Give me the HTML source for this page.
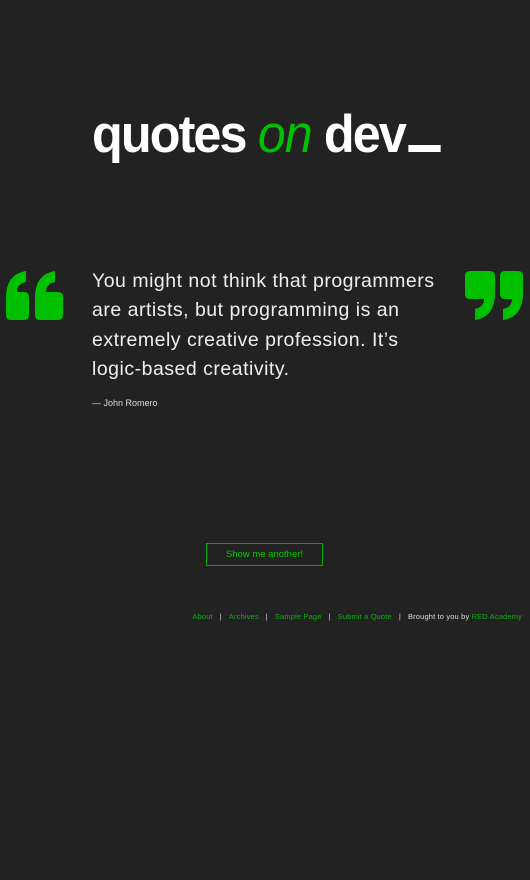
<!DOCTYPE html>
<html><head><style>
body{margin:0;background:#222;width:530px;height:880px;overflow:hidden;font-family:"Liberation Sans",sans-serif;position:relative}
.t{position:absolute;left:92px;top:104px;font-size:53px;font-weight:bold;color:#fff;letter-spacing:-2px;white-space:nowrap;transform:scaleX(0.95);transform-origin:left}
.t i{color:#00c000;font-weight:normal;letter-spacing:-1px}
.t b{display:inline-block;width:34px;height:7px;background:#fff;margin-left:4px;vertical-align:baseline}
.q{position:absolute;left:92px;top:267px;width:350px;font-size:19.5px;line-height:29.3px;color:#eee;letter-spacing:0.5px}
.a{position:absolute;left:92px;top:398px;font-size:9px;color:#ddd}
.b{position:absolute;left:206px;top:543px;width:115px;height:21px;border:1px solid #0a0;color:#0c0;font-size:9.5px;text-align:center;line-height:21px;box-sizing:content-box}
.f{position:absolute;right:8px;top:612px;font-size:7.5px;color:#ddd;white-space:nowrap;letter-spacing:0.15px}
.f a{color:#1a1}
.f s{text-decoration:none;color:#ddd;margin:0 7px}
</style></head><body>
<svg style="position:absolute;left:0;top:260px" width="530" height="70">
<g fill="#00c000">
<path d="M6 38 Q6 14 26 11 L26 22 Q17 24 17 32 L24 32 Q29 32 29 37 L29 55 Q29 60 24 60 L11 60 Q6 60 6 55Z"/>
<path d="M35 38 Q35 14 55 11 L55 22 Q46 24 46 32 L58 32 Q63 32 63 37 L63 55 Q63 60 58 60 L40 60 Q35 60 35 55Z"/>
<path d="M495 33 Q495 57 475 60 L475 49 Q484 47 484 39 L470 39 Q465 39 465 34 L465 16 Q465 11 470 11 L490 11 Q495 11 495 16Z"/>
<path d="M523 33 Q523 57 503 60 L503 49 Q512 47 512 39 L505 39 Q500 39 500 34 L500 16 Q500 11 505 11 L518 11 Q523 11 523 16Z"/>
</g></svg>
<div class="t">quotes <i>on</i> dev<b></b></div>
<div class="q">You might not think that programmers are artists, but programming is an extremely creative profession. It’s <span style="white-space:nowrap">logic-based</span> creativity.</div>
<div class="a">— John Romero</div>
<div class="b">Show me another!</div>
<div class="f"><a>About</a><s>|</s><a>Archives</a><s>|</s><a>Sample Page</a><s>|</s><a>Submit a Quote</a><s>|</s>Brought to you by <a>RED Academy</a></div>
</body></html>
